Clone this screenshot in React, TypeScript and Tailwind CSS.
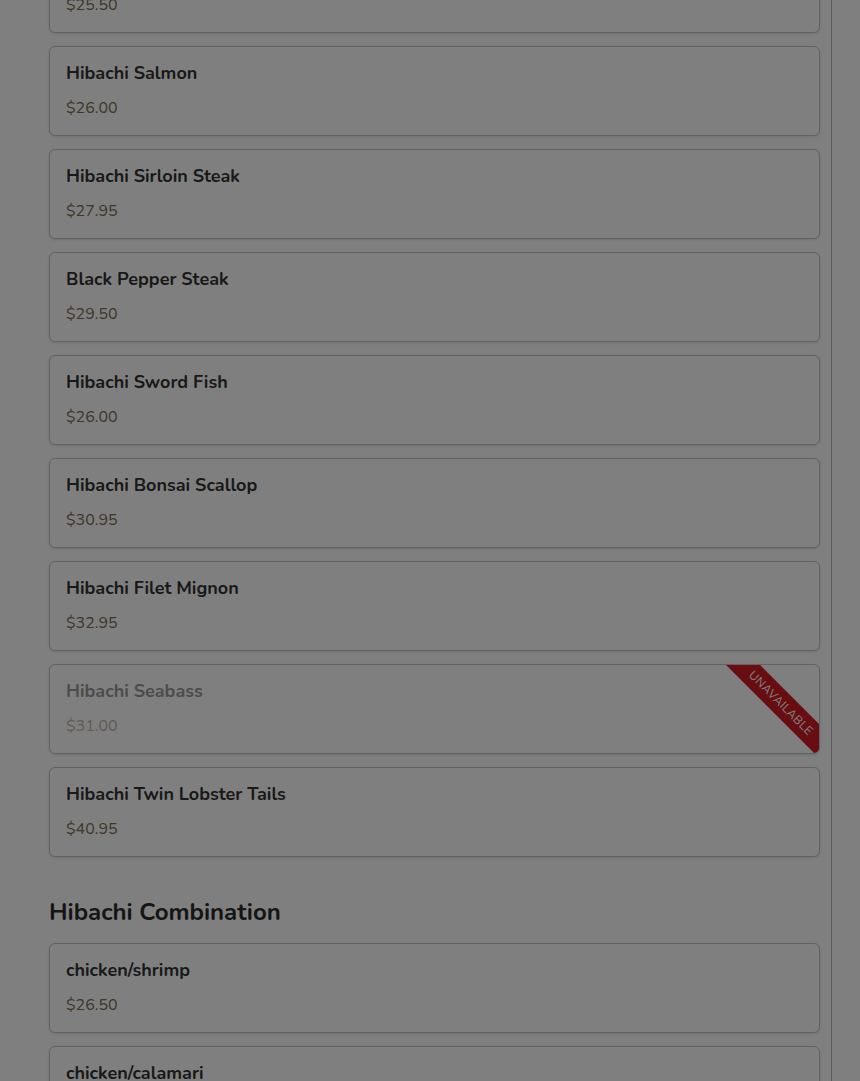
import React from 'react';

interface MenuItem {
  name: string;
  price: string;
  unavailable?: boolean;
}

const HIBACHI: MenuItem[] = [
  { name: 'Hibachi Shrimp', price: '$25.50' },
  { name: 'Hibachi Salmon', price: '$26.00' },
  { name: 'Hibachi Sirloin Steak', price: '$27.95' },
  { name: 'Black Pepper Steak', price: '$29.50' },
  { name: 'Hibachi Sword Fish', price: '$26.00' },
  { name: 'Hibachi Bonsai Scallop', price: '$30.95' },
  { name: 'Hibachi Filet Mignon', price: '$32.95' },
  { name: 'Hibachi Seabass', price: '$31.00', unavailable: true },
  { name: 'Hibachi Twin Lobster Tails', price: '$40.95' },
];

const COMBINATION: MenuItem[] = [
  { name: 'chicken/shrimp', price: '$26.50' },
  { name: 'chicken/calamari', price: '$26.50' },
  { name: 'steak/shrimp', price: '$28.50' },
];

function ItemCard({ item }: { item: MenuItem }) {
  return (
    <div className="relative h-[90px] overflow-hidden rounded-md border border-[#c4c4c4] bg-white px-4 pt-[13px] shadow-[0_1px_3px_rgba(0,0,0,0.12)]">
      <div className={item.unavailable ? 'opacity-50' : ''}>
        <h3 className="text-[18px] font-bold leading-[26px] text-[#333]">{item.name}</h3>
        <p className="mt-[11px] text-[16px] leading-[22px] text-[#7f6d50]">{item.price}</p>
      </div>
      {item.unavailable && (
        <div className="absolute right-[-42px] top-[26px] flex h-[24px] w-[160px] rotate-45 items-center justify-center bg-[#d01a24] text-[12px] uppercase tracking-wide text-white">
          Unavailable
        </div>
      )}
    </div>
  );
}

export default function App() {
  return (
    <div className="relative h-[1081px] overflow-hidden bg-white font-['Nunito','Lato','Noto_Sans',sans-serif]">
      <div className="flex">
        <main className="w-[832px] border-r border-[#b4b4b4] pl-[49px] pr-[11px]">
          <div className="-mt-[57px] space-y-[13px]">
            {HIBACHI.map(item => (
              <ItemCard key={item.name} item={item} />
            ))}
          </div>

          <h2 className="mt-[40px] mb-[16px] text-[24px] font-bold leading-[30px] text-[#2b2b2b]">Hibachi Combination</h2>
          <div className="space-y-[13px]">
            {COMBINATION.map(item => (
              <ItemCard key={item.name} item={item} />
            ))}
          </div>
        </main>
        <aside className="flex-1" />
      </div>

      {/* modal backdrop */}
      <div className="fixed inset-0 bg-black/50" />
    </div>
  );
}
